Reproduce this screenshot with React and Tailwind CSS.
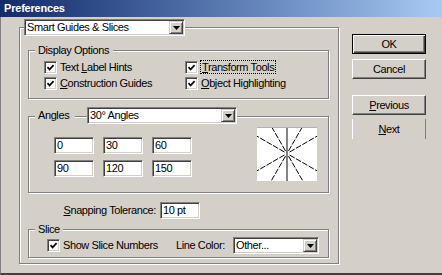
import React from "react";

const sunken =
  "bg-white border border-t-[#808080] border-l-[#808080] border-b-white border-r-white shadow-[inset_1px_1px_0_#404040,inset_-1px_-1px_0_#d4d0c8]";
const etched =
  "border border-[#808080] shadow-[inset_1px_1px_0_#fff,1px_1px_0_#fff]";

function Arrow() {
  return (
    <span className="w-[14px] h-[13px] mr-px shrink-0 bg-[#d4d0c8] border border-t-[#d4d0c8] border-l-[#d4d0c8] border-b-[#404040] border-r-[#404040] shadow-[inset_1px_1px_0_#fff,inset_-1px_-1px_0_#808080] flex items-center justify-center">
      <svg width="7" height="4" viewBox="0 0 7 4">
        <path d="M0 0 H7 L3.5 4 Z" fill="#000" />
      </svg>
    </span>
  );
}

function Dropdown({ className, text }) {
  return (
    <div className={`${sunken} ${className} h-[17px] flex items-center`}>
      <span className="flex-1 pl-[2px] leading-[13px] whitespace-nowrap overflow-hidden">{text}</span>
      <Arrow />
    </div>
  );
}

function Check() {
  return (
    <span className={`${sunken} w-[13px] h-[13px] shrink-0 flex items-center justify-center`}>
      <svg width="9" height="9" viewBox="0 0 9 9">
        <path d="M1.5 4.2 L3.6 6.4 L7.6 2.2" fill="none" stroke="#000" strokeWidth="1.7" />
      </svg>
    </span>
  );
}

function Field({ v }) {
  return <div className={`${sunken} w-[40px] h-[17px] pl-[2px] leading-[14px]`}>{v}</div>;
}

function Diagram() {
  const cx = 30;
  const cy = 26;
  const angles = [30, 60, 120, 150, 210, 240, 300, 330];
  return (
    <svg width="60" height="54" viewBox="0 0 60 54" className="bg-white border-t border-[#b0b0b0] ml-[65px]">
      <line x1={cx} y1="0" x2={cx} y2="54" stroke="#000" strokeWidth="1" />
      {angles.map((a) => {
        const r = (a * Math.PI) / 180;
        return (
          <line
            key={a}
            x1={cx + 3 * Math.cos(r)}
            y1={cy - 3 * Math.sin(r)}
            x2={cx + 45 * Math.cos(r)}
            y2={cy - 45 * Math.sin(r)}
            stroke="#000"
            strokeWidth="1"
            strokeDasharray="6 1.5"
          />
        );
      })}
    </svg>
  );
}

const btn =
  "h-[20px] w-[74px] flex items-center justify-center bg-[#d4d0c8]";

export default function App() {
  return (
    <div className="w-[442px] h-[275px] bg-[#d4d0c8] font-['Liberation_Sans',Arial,sans-serif] text-[11px] leading-[13px] tracking-[-0.4px] text-black overflow-hidden">
      <div className="h-[17px] flex items-center pl-[4px] bg-gradient-to-r from-[#142a6a] via-[#5878b0] to-[#a8caf2]">
        <span className="font-bold text-white text-[11px] tracking-[-0.2px]">Preferences</span>
      </div>
      <div className="flex h-[258px] border-l border-l-[#808080] border-b-2 border-b-[#404040]">
        {/* outer group */}
        <div className={`${etched} ml-[18px] mt-[10px] w-[320px] h-[237px] flex flex-col`}>
          <Dropdown className="-mt-[9px] ml-[4px] w-[161px]" text="Smart Guides & Slices" />

          {/* Display Options */}
          <div className={`${etched} mt-[14px] ml-[8px] w-[301px] h-[49px] flex flex-col`}>
            <div className="-mt-[7px] ml-[6px] pl-[3px] pr-[4px] h-[13px] self-start bg-[#d4d0c8]">Display Options</div>
            <div className="flex mt-[2px] ml-[15px]">
              <div className="w-[141px] flex flex-col">
                <div className="h-[16px] flex items-center">
                  <Check />
                  <span className="ml-[3px]">Text <span className="underline">L</span>abel Hints</span>
                </div>
                <div className="h-[16px] flex items-center">
                  <Check />
                  <span className="ml-[3px]"><span className="underline">C</span>onstruction Guides</span>
                </div>
              </div>
              <div className="flex flex-col">
                <div className="h-[16px] flex items-center">
                  <Check />
                  <span className="ml-[2px] px-px border border-dotted border-black leading-[12px]"><span className="underline">T</span>ransform Tools</span>
                </div>
                <div className="h-[16px] flex items-center">
                  <Check />
                  <span className="ml-[3px]"><span className="underline">O</span>bject Highlighting</span>
                </div>
              </div>
            </div>
          </div>

          {/* Angles */}
          <div className={`${etched} mt-[17px] ml-[8px] w-[301px] h-[77px] flex flex-col`}>
            <div className="-mt-[10px] ml-[6px] flex items-center self-start">
              <div className="w-[40px] pl-[3px] h-[13px] bg-[#d4d0c8]">Angles</div>
              <Dropdown className="ml-[12px] w-[150px]" text="30° Angles" />
            </div>
            <div className="flex mt-[3px]">
              <div className="grid grid-cols-3 gap-x-[9px] gap-y-[6px] ml-[25px] mt-[10px] self-start">
                <Field v="0" />
                <Field v="30" />
                <Field v="60" />
                <Field v="90" />
                <Field v="120" />
                <Field v="150" />
              </div>
              <Diagram />
            </div>
          </div>

          {/* Snapping */}
          <div className="flex items-center mt-[9px]">
            <div className="w-[136px] text-right">
              <span className="underline">S</span>napping Tolerance:
            </div>
            <div className="ml-[4px]">
              <Field v="10 pt" />
            </div>
          </div>

          {/* Slice */}
          <div className={`${etched} mt-[10px] ml-[8px] w-[301px] h-[29px] flex flex-col`}>
            <div className="-mt-[7px] ml-[6px] pl-[3px] pr-[3px] h-[13px] self-start bg-[#d4d0c8]">Slice</div>
            <div className="flex items-center mt-px ml-[18px]">
              <div className="w-[129px] flex items-center">
                <Check />
                <span className="ml-[3px]">Show Slice Numbers</span>
              </div>
              <div className="w-[57px]">Line Color:</div>
              <Dropdown className="w-[86px]" text="Other..." />
            </div>
          </div>
        </div>

        {/* buttons */}
        <div className="ml-[13px] mt-[17px] w-[74px] flex flex-col">
          <div className={`${btn} border border-black shadow-[inset_1px_1px_0_#fff,inset_-1px_-1px_0_#404040,inset_-2px_-2px_0_#808080]`}>OK</div>
          <div className={`${btn} mt-[5px] border border-t-white border-l-white border-b-[#404040] border-r-[#404040] shadow-[inset_-1px_-1px_0_#808080]`}>Cancel</div>
          <div className={`${btn} mt-[16px] border border-t-white border-l-white border-b-[#404040] border-r-[#404040] shadow-[inset_-1px_-1px_0_#808080]`}>
            <span><span className="underline">P</span>revious</span>
          </div>
          <div className={`${btn} mt-[4px] border-l border-r border-l-white border-r-[#808080]`}>
            <span><span className="underline">N</span>ext</span>
          </div>
        </div>
      </div>
    </div>
  );
}
